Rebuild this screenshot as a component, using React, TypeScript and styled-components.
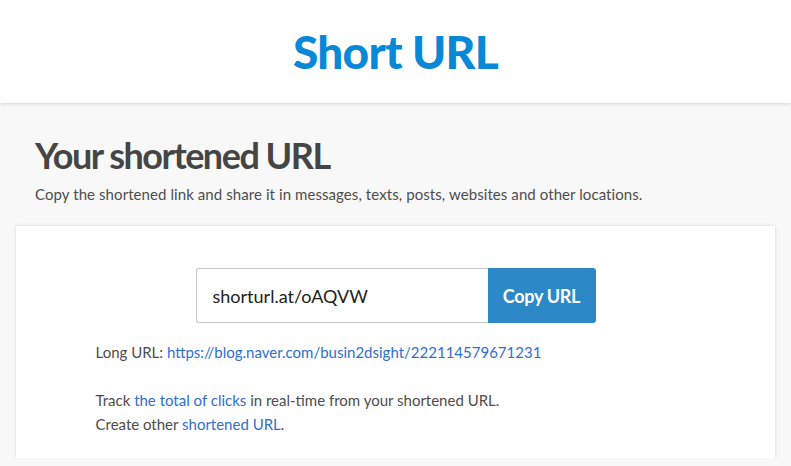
import React from "react";
import styled, { createGlobalStyle } from "styled-components";

const Global = createGlobalStyle`
  html, body { margin: 0; padding: 0; background: #f8f8f8; }
  body { font-family: Lato, "Noto Sans", sans-serif; color: #4a4a4a; }
  * { box-sizing: border-box; }
`;

const Header = styled.header`
  height: 103px;
  background: #fff;
  box-shadow: 0 1px 3px rgba(0,0,0,0.15);
  display: flex;
  align-items: center;
  justify-content: center;
  position: relative;
`;

const Logo = styled.h1`
  margin: 0;
  font-family: Lato, sans-serif;
  font-weight: 900;
  font-size: 46px;
  color: #0a88d8;
  letter-spacing: -0.7px;
  padding-top: 0;
`;

const Main = styled.main`
  padding: 0 16px;
`;

const Intro = styled.section`
  padding: 30px 19px 21px;
`;

const Title = styled.h2`
  margin: 0 0 6px;
  font-family: Lato, sans-serif;
  font-weight: 700;
  font-size: 36px;
  line-height: 44px;
  color: #454545;
  letter-spacing: -1.5px;
`;

const Lead = styled.p`
  margin: 0;
  font-family: Lato, sans-serif;
  font-size: 15px;
  line-height: 22px;
  letter-spacing: 0.08px;
  color: #4d4d4d;
`;

const Card = styled.section`
  background: #fff;
  box-shadow: 0 0 3px rgba(0,0,0,0.15);
  padding: 42px 0 22px;
`;

const Group = styled.div`
  width: 400px;
  margin: 0 auto;
  display: flex;
  height: 55px;
`;

const Field = styled.input`
  flex: 1;
  min-width: 0;
  height: 55px;
  border: 1px solid #c9c9c9;
  border-right: none;
  border-radius: 3px 0 0 3px;
  padding: 0 16px;
  font-family: Lato, sans-serif;
  font-size: 18px;
  color: #222;
  outline: none;
`;

const CopyButton = styled.button`
  width: 108px;
  height: 55px;
  border: none;
  border-radius: 0 3px 3px 0;
  background: #2d88c8;
  color: #fff;
  font-family: Lato, sans-serif;
  font-weight: 700;
  font-size: 18px;
  letter-spacing: -0.3px;
  cursor: pointer;
`;

const Info = styled.div`
  width: 600px;
  margin: 17px auto 0;
  font-family: Lato, sans-serif;
  font-size: 15px;
  line-height: 24px;
  color: #4d4d4d;
`;

const Line = styled.p<{ $gap?: number }>`
  margin: ${(p) => p.$gap ?? 0}px 0 0;
`;

const Link = styled.a`
  color: #2f6ed3;
  text-decoration: none;
`;

export default function App() {
  return (
    <>
      <Global />
      <Header>
        <Logo>Short URL</Logo>
      </Header>
      <Main>
        <Intro>
          <Title>Your shortened URL</Title>
          <Lead>
            Copy the shortened link and share it in messages, texts, posts, websites and other locations.
          </Lead>
        </Intro>
        <Card>
          <Group>
            <Field readOnly value="shorturl.at/oAQVW" />
            <CopyButton>Copy URL</CopyButton>
          </Group>
          <Info>
            <Line>
              Long URL: <Link href="#">https://blog.naver.com/busin2dsight/222114579671231</Link>
            </Line>
            <Line $gap={24}>
              Track <Link href="#">the total of clicks</Link> in real-time from your shortened URL.
            </Line>
            <Line>
              Create other <Link href="#">shortened URL</Link>.
            </Line>
          </Info>
        </Card>
      </Main>
    </>
  );
}
